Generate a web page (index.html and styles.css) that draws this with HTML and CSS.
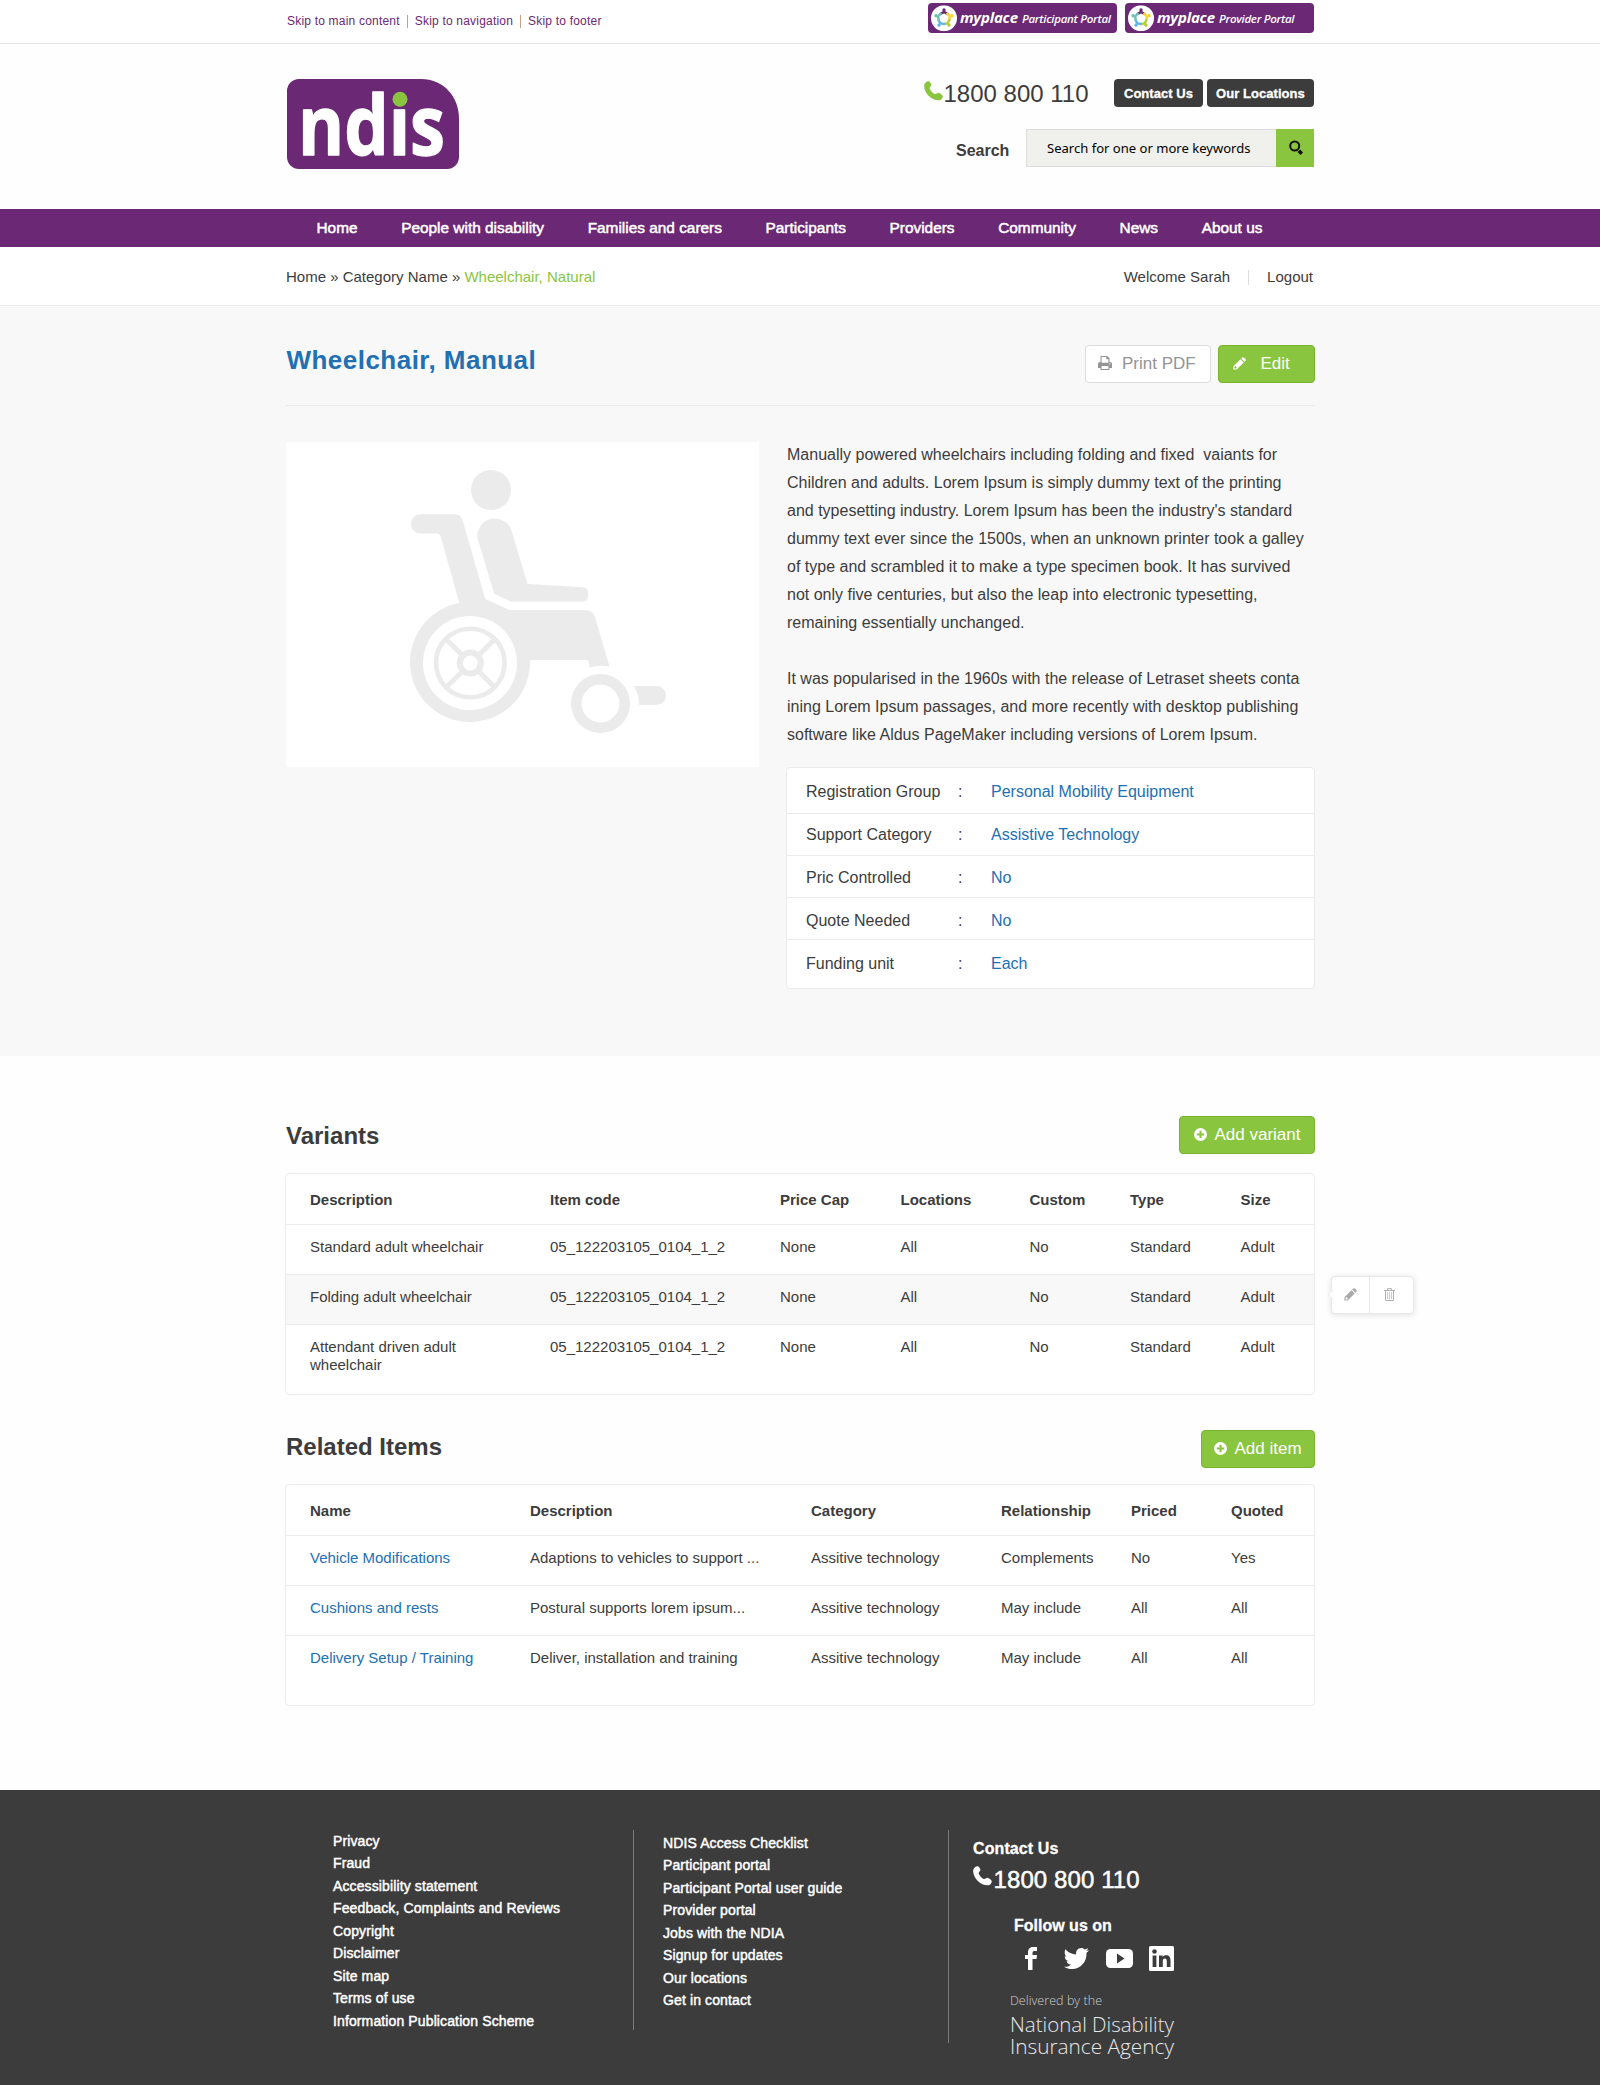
FILE: index.html
```html
<!DOCTYPE html>
<html lang="en">
<head>
<meta charset="utf-8">
<title>Wheelchair, Manual</title>
<link rel="stylesheet" href="styles.css">
</head>
<body>
<svg class="defs" aria-hidden="true">
  <symbol id="phone" viewBox="0 0 19 20"><path d="M1 2.200C2 .9 3.600 0 4.900.3c1 .3 2.300 2.300 2.500 3.500.2 1.300-1.900 2.200-1.700 3.400.3 1.900 3.300 5.200 5.200 5.800 1.300.4 2.200-1.400 3.500-1.200 1.300.2 4 2.100 4.300 3.200.3 1.300-.9 3.400-2.300 4-2.800 1.200-8.300-.7-11.800-4.300C1.200 11.200-1.200 5.200 1 2.200z"/></symbol>
  <symbol id="pencil" viewBox="0 0 13 13"><path d="M9.200.6a1.300 1.300 0 0 1 1.800 0l1.400 1.400a1.300 1.300 0 0 1 0 1.800l-1 1L8.200 1.600zM7.500 2.300l3.200 3.200-7 7H.4V9.300zM1.500 9.900v1.500H3l.8-.8-1.500-1.500z" fill-rule="evenodd"/></symbol>
  <symbol id="plus" viewBox="0 0 14 14"><path fill-rule="evenodd" d="M7 0a7 7 0 1 1 0 14A7 7 0 0 1 7 0zM5.900 3v2.900H3v2.200h2.900V11h2.200V8.100H11V5.900H8.100V3z"/></symbol>
  <symbol id="printer" viewBox="0 0 14 14"><path fill-rule="evenodd" d="M2.500 0h6.800l2.200 2.200V6H12a2 2 0 0 1 2 2v4h-2.500v2h-9v-2H0V8a2 2 0 0 1 2-2h.5zM3.600 1v5.800h6.800V3.200H8.300V1zM3.600 10v2.900h6.800V10zM11.700 7.300a.6.6 0 1 0 0 1.200.6.6 0 0 0 0-1.200z"/></symbol>
  <symbol id="star-people" viewBox="0 0 26 26">
    <circle cx="13" cy="13" r="13" fill="#fff"/>
    <g fill="#6a2875"><circle cx="13" cy="4.600" r="1.700"/><path d="M8.300 7.900 13 5.300l4.700 2.600-1 2L13 8.200 9.300 9.900z"/></g>
    <g fill="#fbd334" transform="rotate(72 13 13)"><circle cx="13" cy="4.600" r="1.700"/><path d="M8.300 7.900 13 5.300l4.700 2.600-1 2L13 8.200 9.300 9.900z"/></g>
    <g fill="#b5cf35" transform="rotate(144 13 13)"><circle cx="13" cy="4.600" r="1.700"/><path d="M8.300 7.900 13 5.300l4.700 2.600-1 2L13 8.200 9.300 9.900z"/></g>
    <g fill="#63b5e5" transform="rotate(216 13 13)"><circle cx="13" cy="4.600" r="1.700"/><path d="M8.300 7.900 13 5.300l4.700 2.600-1 2L13 8.200 9.300 9.900z"/></g>
    <g fill="#71c3b4" transform="rotate(288 13 13)"><circle cx="13" cy="4.600" r="1.700"/><path d="M8.300 7.900 13 5.300l4.700 2.600-1 2L13 8.200 9.300 9.900z"/></g>
  </symbol>
</svg>

<div class="topbar">
  <div class="container topbar-inner">
    <div class="skip"><a>Skip to main content</a><i></i><a>Skip to navigation</a><i></i><a>Skip to footer</a></div>
    <div class="portals">
      <svg class="portal" width="189" height="30"><rect width="189" height="30" rx="4"/><use href="#star-people" x="3" y="2.300" width="26" height="26"/><text class="my" x="32" y="19.500" textLength="58">myplace</text><text class="kind" x="94" y="19.500" textLength="89">Participant Portal</text></svg>
      <svg class="portal" width="189" height="30"><rect width="189" height="30" rx="4"/><use href="#star-people" x="3" y="2.300" width="26" height="26"/><text class="my" x="32" y="19.500" textLength="58">myplace</text><text class="kind" x="94" y="19.500" textLength="75.500">Provider Portal</text></svg>
    </div>
  </div>
</div>

<header class="container header">
  <svg class="logo" width="172" height="90" viewBox="0 0 172 90" role="img" aria-label="ndis">
    <path fill="#6a2875" d="M12 0h122c22 0 38 17 38 40v38a12 12 0 0 1-12 12H12A12 12 0 0 1 0 78V12A12 12 0 0 1 12 0z"/>
    <text x="11" y="76.300" textLength="147" lengthAdjust="spacingAndGlyphs">ndıs</text>
    <circle cx="113" cy="20.300" r="7.500" fill="#8ac53f"/>
  </svg>
  <div class="header-right">
    <div class="contact">
      <svg class="icon tel-icon" width="19" height="20"><use href="#phone"/></svg>
      <span class="tel">1800 800 110</span>
      <a class="dark dark-a">Contact Us</a><a class="dark dark-b">Our Locations</a>
    </div>
    <div class="search">
      <label>Search</label>
      <div class="field">Search for one or more keywords</div>
      <div class="go"><svg width="15" height="16" viewBox="0 0 15 16"><circle cx="5.700" cy="6" r="4.500" fill="none" stroke="#111" stroke-width="2"/><path d="M9.800 10.800l3 3" stroke="#111" stroke-width="3.600"/></svg></div>
    </div>
  </div>
</header>

<nav class="nav"><div class="container nav-inner"><a>Home</a><a>People with disability</a><a>Families and carers</a><a>Participants</a><a>Providers</a><a>Community</a><a>News</a><a>About us</a></div></nav>

<div class="crumbs"><div class="container crumbs-inner">
  <div>Home » Category Name » <span class="green">Wheelchair, Natural</span></div>
  <div class="user"><span>Welcome Sarah</span><i></i><span>Logout</span></div>
</div></div>

<main>
<section class="product"><div class="container">
  <div class="title-row">
    <h1>Wheelchair, Manual</h1>
    <div class="actions">
      <a class="btn btn-white btn-print"><svg class="icon" width="14" height="14"><use href="#printer"/></svg>Print PDF</a>
      <a class="btn btn-edit"><svg class="icon" width="13" height="13"><use href="#pencil"/></svg>Edit</a>
    </div>
  </div>
  <div class="detail">
    <div class="photo">
      <svg width="473" height="325" viewBox="0 0 473 325" fill="#ebebeb">
        <circle cx="205" cy="48" r="20"/>
        <path d="M134.500 72.300H169q5.500 0 7.500 6L199.300 157l24 11H299q7.500 0 10 7l14.500 49.500q-10-2-20 1.300L303 221q-.5-3-3-3H244A60 60 0 1 1 173.300 161L155 95.500q-1-4-4.500-4h-16a9.600 9.600 0 0 1 0-19.200z"/>
        <path d="M191.500 96a17.500 17.500 0 0 1 34.300-6.500L241.500 142l55 3.200q5.500.3 5.500 5.300v4q0 5-5.500 5H224.500L208 151.500z"/>
        <circle cx="184" cy="221" r="47" fill="#fff"/>
        <circle cx="184.300" cy="221" r="34.300" fill="none" stroke="#ebebeb" stroke-width="4.600"/>
        <path d="M161 198l47 46.500M208 198l-47 46.500" stroke="#ebebeb" stroke-width="4.800"/>
        <circle cx="184.300" cy="221" r="10.500" fill="#fff" stroke="#ebebeb" stroke-width="6.200"/>
        <circle cx="314.500" cy="261.500" r="24.200" fill="none" stroke="#ebebeb" stroke-width="10.600"/>
        <path d="M348 244h22.500a9.500 9.500 0 0 1 0 19H353q0-11-5-19z"/>
      </svg>
    </div>
    <div class="info">
      <p>Manually powered wheelchairs including folding and fixed&nbsp; vaiants for<br>Children and adults. Lorem Ipsum is simply dummy text of the printing<br>and typesetting industry. Lorem Ipsum has been the industry's standard<br>dummy text ever since the 1500s, when an unknown printer took a galley<br>of type and scrambled it to make a type specimen book. It has survived<br>not only five centuries, but also the leap into electronic typesetting,<br>remaining essentially unchanged.</p>
      <p>It was popularised in the 1960s with the release of Letraset sheets conta<br>ining Lorem Ipsum passages, and more recently with desktop publishing<br>software like Aldus PageMaker including versions of Lorem Ipsum.</p>
      <dl class="specs">
        <div><dt>Registration Group</dt><span>:</span><dd>Personal Mobility Equipment</dd></div>
        <div><dt>Support Category</dt><span>:</span><dd>Assistive Technology</dd></div>
        <div><dt>Pric Controlled</dt><span>:</span><dd>No</dd></div>
        <div><dt>Quote Needed</dt><span>:</span><dd>No</dd></div>
        <div><dt>Funding unit</dt><span>:</span><dd>Each</dd></div>
      </dl>
    </div>
  </div>
</div></section>

<section class="container list">
  <div class="list-head">
    <h2>Variants</h2>
    <a class="btn btn-variant"><svg class="icon" width="13" height="13"><use href="#plus"/></svg>Add variant</a>
  </div>
  <div class="table variants">
    <div class="tr th"><span>Description</span><span>Item code</span><span>Price Cap</span><span>Locations</span><span>Custom</span><span>Type</span><span>Size</span></div>
    <div class="tr"><span>Standard adult wheelchair</span><span>05_122203105_0104_1_2</span><span>None</span><span>All</span><span>No</span><span>Standard</span><span>Adult</span></div>
    <div class="tr active"><span>Folding adult wheelchair</span><span>05_122203105_0104_1_2</span><span>None</span><span>All</span><span>No</span><span>Standard</span><span>Adult</span>
      <div class="popover">
        <b><svg class="icon" width="13" height="13"><use href="#pencil"/></svg></b>
        <b><svg width="11" height="13" viewBox="0 0 11 13" fill="none" stroke="#b0b0b0"><path d="M0 2.500h11M3.500 2V.6h4V2M1.500 2.500V12q0 .5.500.5h7q.5 0 .5-.5V2.500"/><path d="M3.500 4v7M5.500 4v7M7.500 4v7" stroke="#ccc"/></svg></b>
      </div>
    </div>
    <div class="tr last"><span>Attendant driven adult<br>wheelchair</span><span>05_122203105_0104_1_2</span><span>None</span><span>All</span><span>No</span><span>Standard</span><span>Adult</span></div>
  </div>
</section>

<section class="container list related">
  <div class="list-head">
    <h2>Related Items</h2>
    <a class="btn btn-item"><svg class="icon" width="13" height="13"><use href="#plus"/></svg>Add item</a>
  </div>
  <div class="table items">
    <div class="tr th"><span>Name</span><span>Description</span><span>Category</span><span>Relationship</span><span>Priced</span><span>Quoted</span></div>
    <div class="tr"><a>Vehicle Modifications</a><span>Adaptions to vehicles to support ...</span><span>Assitive technology</span><span>Complements</span><span>No</span><span>Yes</span></div>
    <div class="tr"><a>Cushions and rests</a><span>Postural supports lorem ipsum...</span><span>Assitive technology</span><span>May include</span><span>All</span><span>All</span></div>
    <div class="tr last"><a>Delivery Setup / Training</a><span>Deliver, installation and training</span><span>Assitive technology</span><span>May include</span><span>All</span><span>All</span></div>
  </div>
</section>
</main>

<footer class="footer"><div class="container footer-inner">
  <ul class="links-a"><li>Privacy</li><li>Fraud</li><li>Accessibility statement</li><li>Feedback, Complaints and Reviews</li><li>Copyright</li><li>Disclaimer</li><li>Site map</li><li>Terms of use</li><li>Information Publication Scheme</li></ul>
  <ul class="links-b"><li>NDIS Access Checklist</li><li>Participant portal</li><li>Participant Portal user guide</li><li>Provider portal</li><li>Jobs with the NDIA</li><li>Signup for updates</li><li>Our locations</li><li>Get in contact</li></ul>
  <div class="foot-contact">
    <h3>Contact Us</h3>
    <div class="foot-tel"><svg class="icon" width="19" height="20"><use href="#phone"/></svg><span>1800 800 110</span></div>
    <h3 class="follow">Follow us on</h3>
    <div class="social">
      <svg class="icon" width="12" height="23" viewBox="0 0 12 23"><path d="M3 23V12H0V8h3V5.500C3 2 5 0 8.500 0H12v4H9.500C8 4 7.500 4.700 7.500 6v2H12l-.5 4h-4v11z"/></svg>
      <svg class="icon" width="25" height="21" viewBox="0 0 25 21"><path d="M1.500 1.200c2.700 3.200 6.300 5 10.700 5.200C11.500 2.900 14 0 17.300 0c1.500 0 2.700.6 3.600 1.500L24.200.3c-.4 1.200-1 1.900-2 2.600l2.800-.7c-.7 1-1.500 1.900-2.500 2.600C23 14 16.500 21 8.300 21 5.200 21 2.400 20.200 0 18.700c2.700.3 5.200-.5 7.200-2-2.200-.1-4-1.500-4.700-3.500h2.200C2.200 12.600.7 10.600.7 8.200l2.200.6C.7 7.200 0 4 1.500 1.200z"/></svg>
      <svg class="icon" width="27" height="19" viewBox="0 0 27 19"><rect width="27" height="19" rx="4.500"/><path d="M11 4.500v10l7.500-5z" fill="#3c3c3c"/></svg>
      <svg class="icon" width="25" height="25" viewBox="0 0 25 25"><rect width="25" height="25" rx="1.500"/><g fill="#3c3c3c"><circle cx="5.500" cy="5.500" r="2.300"/><path d="M3.600 9.500h3.800V21H3.600zM10 9.500h3.600v1.600c.8-1.300 2-1.900 3.500-1.900 3.200 0 4.400 2 4.400 5.200V21h-3.700v-5.800c0-1.700-.5-2.800-1.900-2.800s-2.100 1-2.100 2.800V21H10z"/></g></svg>
    </div>
    <svg class="agency" width="170" height="74" viewBox="0 0 170 74">
      <text class="small" x="0" y="14.500" textLength="92">Delivered by the</text>
      <text x="0" y="41.500" textLength="164" lengthAdjust="spacingAndGlyphs">National Disability</text>
      <text x="0" y="63.500" textLength="164" lengthAdjust="spacingAndGlyphs">Insurance Agency</text>
    </svg>
  </div>
</div></footer>
</body>
</html>
```
FILE: styles.css
```css
* { box-sizing: border-box; }
body, h1, h2, h3, p, ul, dl, dd { margin: 0; padding: 0; }
body { background: #fefefe; color: #3c3c3c; font: 15px/17px "Liberation Sans", Arial, sans-serif; }
.defs { position: absolute; width: 0; height: 0; }
svg { display: block; flex: none; }
.icon { fill: currentColor; }
.container { width: 1030px; margin: 0 auto; }
.green { color: #8ac53f; }

/* Top bar */
.topbar { height: 44px; border-bottom: 1px solid #e5e5e5; background: #fff; }
.topbar-inner { display: flex; justify-content: space-between; padding: 3px 1px 0 2px; }
.skip { display: flex; padding-top: 11px; font-size: 12px; line-height: 14px; letter-spacing: .2px; color: #6a2875; }
.skip i { width: 1px; height: 13px; margin: 1px 7px 0 7px; background: #c9a08c; }
.portals { display: flex; gap: 8px; }
.portal rect { fill: #6a2875; }
.portal text { fill: #fff; font-family: "Open Sans", "Noto Sans", sans-serif; font-style: italic; }
.portal .my { font-size: 15px; font-weight: 700; }
.portal .kind { font-size: 11.500px; font-weight: 600; }

/* Header */
.header { display: flex; justify-content: space-between; height: 165px; padding: 35px 1px 0 2px; }
.logo { overflow: visible; }
.logo text { fill: #fff; stroke: #fff; stroke-width: 1.300; stroke-linejoin: round; font: 700 83px "Open Sans", "Noto Sans", sans-serif; }
.header-right { display: flex; flex-direction: column; align-items: flex-end; gap: 22px; }
.contact { display: flex; height: 28px; }
.tel-icon { margin-top: 1.500px; color: #8ac53f; }
.tel { width: 171.500px; padding-left: 1px; font-size: 24px; line-height: 30px; }
.dark { height: 28px; border-radius: 4px; background: #3c3c3c; color: #fff; text-align: center; font-size: 13px; font-weight: 700; line-height: 30px; letter-spacing: .05px; -webkit-text-stroke: .3px #fff; }
.dark-a { width: 89px; }
.dark-b { width: 107px; margin-left: 4px; }
.search { display: flex; height: 38px; }
.search label { width: 70px; font-size: 16px; font-weight: 700; line-height: 44px; }
.field { width: 250px; padding-left: 20px; border: 1px solid #ddd; border-right: 0; background: #f0f0ec; color: #000; font: 13.050px/36px "Noto Sans", sans-serif; }
.go { width: 38px; padding: 11px 0 0 13px; background: #8ac53f; }

/* Navigation */
.nav { height: 38px; background: #6a2875; }
.nav-inner { display: flex; gap: 43.600px; padding-left: 31.500px; color: #fff; font-size: 15.400px; line-height: 38px; -webkit-text-stroke: .5px #fff; }
.crumbs { height: 59px; border-bottom: 1px solid #ebebeb; background: #fff; }
.crumbs-inner { display: flex; justify-content: space-between; padding: 0 2px 0 1px; line-height: 59px; }
.user { display: flex; }
.user i { width: 1px; height: 15px; margin: 23px 18px 0; background: #ddd; }

/* Buttons */
.btn { display: flex; align-items: flex-start; height: 38px; padding-top: 8px; border: 1px solid #78b42c; border-radius: 4px; background: #8ac53f; color: #fff; font-size: 17px; line-height: 19px; }
.btn svg { margin-top: 3px; }
.btn-white { border-color: #ddd; background: #fff; color: #949494; }
.btn-print { width: 126px; padding-left: 12px; }
.btn-print svg { margin-right: 10px; margin-top: 2px; }
.btn-edit { width: 97px; padding-left: 13.500px; }
.btn-edit svg { margin-right: 15px; }
.btn-variant { width: 136px; padding-left: 14px; }
.btn-item { width: 114px; padding-left: 12px; }
.btn-variant svg, .btn-item svg { margin-right: 7.500px; }

/* Product */
.product { height: 750px; background: #f8f8f8; }
.title-row { display: flex; justify-content: space-between; height: 100px; margin-left: 1px; padding-top: 39px; border-bottom: 1px solid #ebebeb; }
h1 { padding-left: .5px; color: #2270b2; font-size: 26px; line-height: 30px; letter-spacing: .47px; }
.actions { display: flex; gap: 7px; }
.detail { display: flex; gap: 27px; padding: 36px 0 0 1px; }
.photo { width: 473px; height: 325px; background: #fff; }
.info { flex: 1; margin-top: -1px; font-size: 16px; }
.info p { padding-left: 1px; line-height: 28px; margin-bottom: 28px; white-space: nowrap; }
.info p + p { margin-bottom: 18px; }
.specs { height: 222px; border: 1px solid #ebebeb; border-radius: 4px; background: #fff; }
.specs div { display: grid; grid-template-columns: 152px 33px 1fr; height: 42px; padding: 14px 0 0 19px; border-bottom: 1px solid #ebebeb; line-height: 18px; }
.specs div:first-child { height: 46px; padding-top: 15px; }
.specs div:nth-child(2) { padding-top: 12px; }
.specs div:nth-child(3) { padding-top: 13px; }
.specs div:nth-child(5) { padding-top: 15px; border: 0; }
.specs dd { color: #2270b2; }

/* Lists */
.list-head { display: flex; justify-content: space-between; align-items: flex-start; height: 57px; margin-top: 60px; }
.list-head h2 { padding: 6px 0 0 1px; font-size: 24px; line-height: 28px; }
.related .list-head { height: 54px; margin-top: 35px; }
.related h2 { padding-top: 3px; }
.table { height: 222px; border: 1px solid #ebebeb; border-radius: 4px; background: #fff; }
.tr { position: relative; display: grid; height: 50px; padding: 13px 0 0 24px; border-bottom: 1px solid #ebebeb; line-height: 18px; }
.tr.th { height: 51px; padding-top: 17px; font-weight: 700; }
.tr.last { border: 0; }
.tr a { color: #2270b2; }
.tr.active { background: #f8f8f8; }
.variants .tr { grid-template-columns: 240px 230px 120.500px 129px 100.500px 110.500px 1fr; }
.items .tr { grid-template-columns: 220px 281px 190px 130px 100px 1fr; }
.popover { position: absolute; left: 1045px; top: 1px; display: flex; width: 83px; height: 38px; border: 1px solid #e8e8e8; border-radius: 4px; background: #fff; box-shadow: 0 1px 6px rgba(0,0,0,.12); }
.popover::before { content: ""; position: absolute; left: -3.500px; top: 14px; width: 6px; height: 6px; background: #fff; border: solid #ececec; border-width: 0 0 1px 1px; transform: rotate(45deg); }
.popover b { width: 38px; padding: 11px 0 0 12px; border-right: 1px solid #e8e8e8; color: #aaa; }
.popover b + b { width: 44px; padding: 11px 0 0 14px; border: 0; }

/* Footer */
.footer { height: 295px; margin-top: 84px; background: #3c3c3c; color: #fff; }
.footer-inner { display: flex; align-items: flex-start; padding-top: 40px; }
.footer ul { list-style: none; font-size: 14px; line-height: 22.450px; letter-spacing: .12px; -webkit-text-stroke: .45px #fff; border-right: 1px solid #7b7b7b; }
.links-a { width: 349px; height: 200px; padding: 0 0 0 48px; }
.links-b { width: 315px; height: 213px; padding: 2px 0 0 29px; }
.foot-contact { padding-left: 24px; }
.footer h3 { padding-top: 9px; font-size: 16px; line-height: 20px; letter-spacing: .1px; -webkit-text-stroke: .3px #fff; }
.foot-tel { display: flex; margin-top: 7px; font-size: 24px; line-height: 28px; letter-spacing: .1px; -webkit-text-stroke: .5px #fff; }
.foot-tel span { padding-left: 1.500px; }
.footer .follow { padding: 22px 0 0 41px; letter-spacing: 0; }
.social { display: flex; align-items: center; padding: 10px 0 0 52px; }
.social svg:nth-child(2) { margin-left: 27px; }
.social svg:nth-child(3) { margin-left: 17px; }
.social svg:nth-child(4) { margin-left: 16px; }
.agency { margin: 19px 0 0 37px; }
.agency text { fill: #e8e8e8; font: 300 20.500px "Open Sans", "Noto Sans", sans-serif; }
.agency .small { fill: #cfcfcf; font-size: 12.500px; }
```
